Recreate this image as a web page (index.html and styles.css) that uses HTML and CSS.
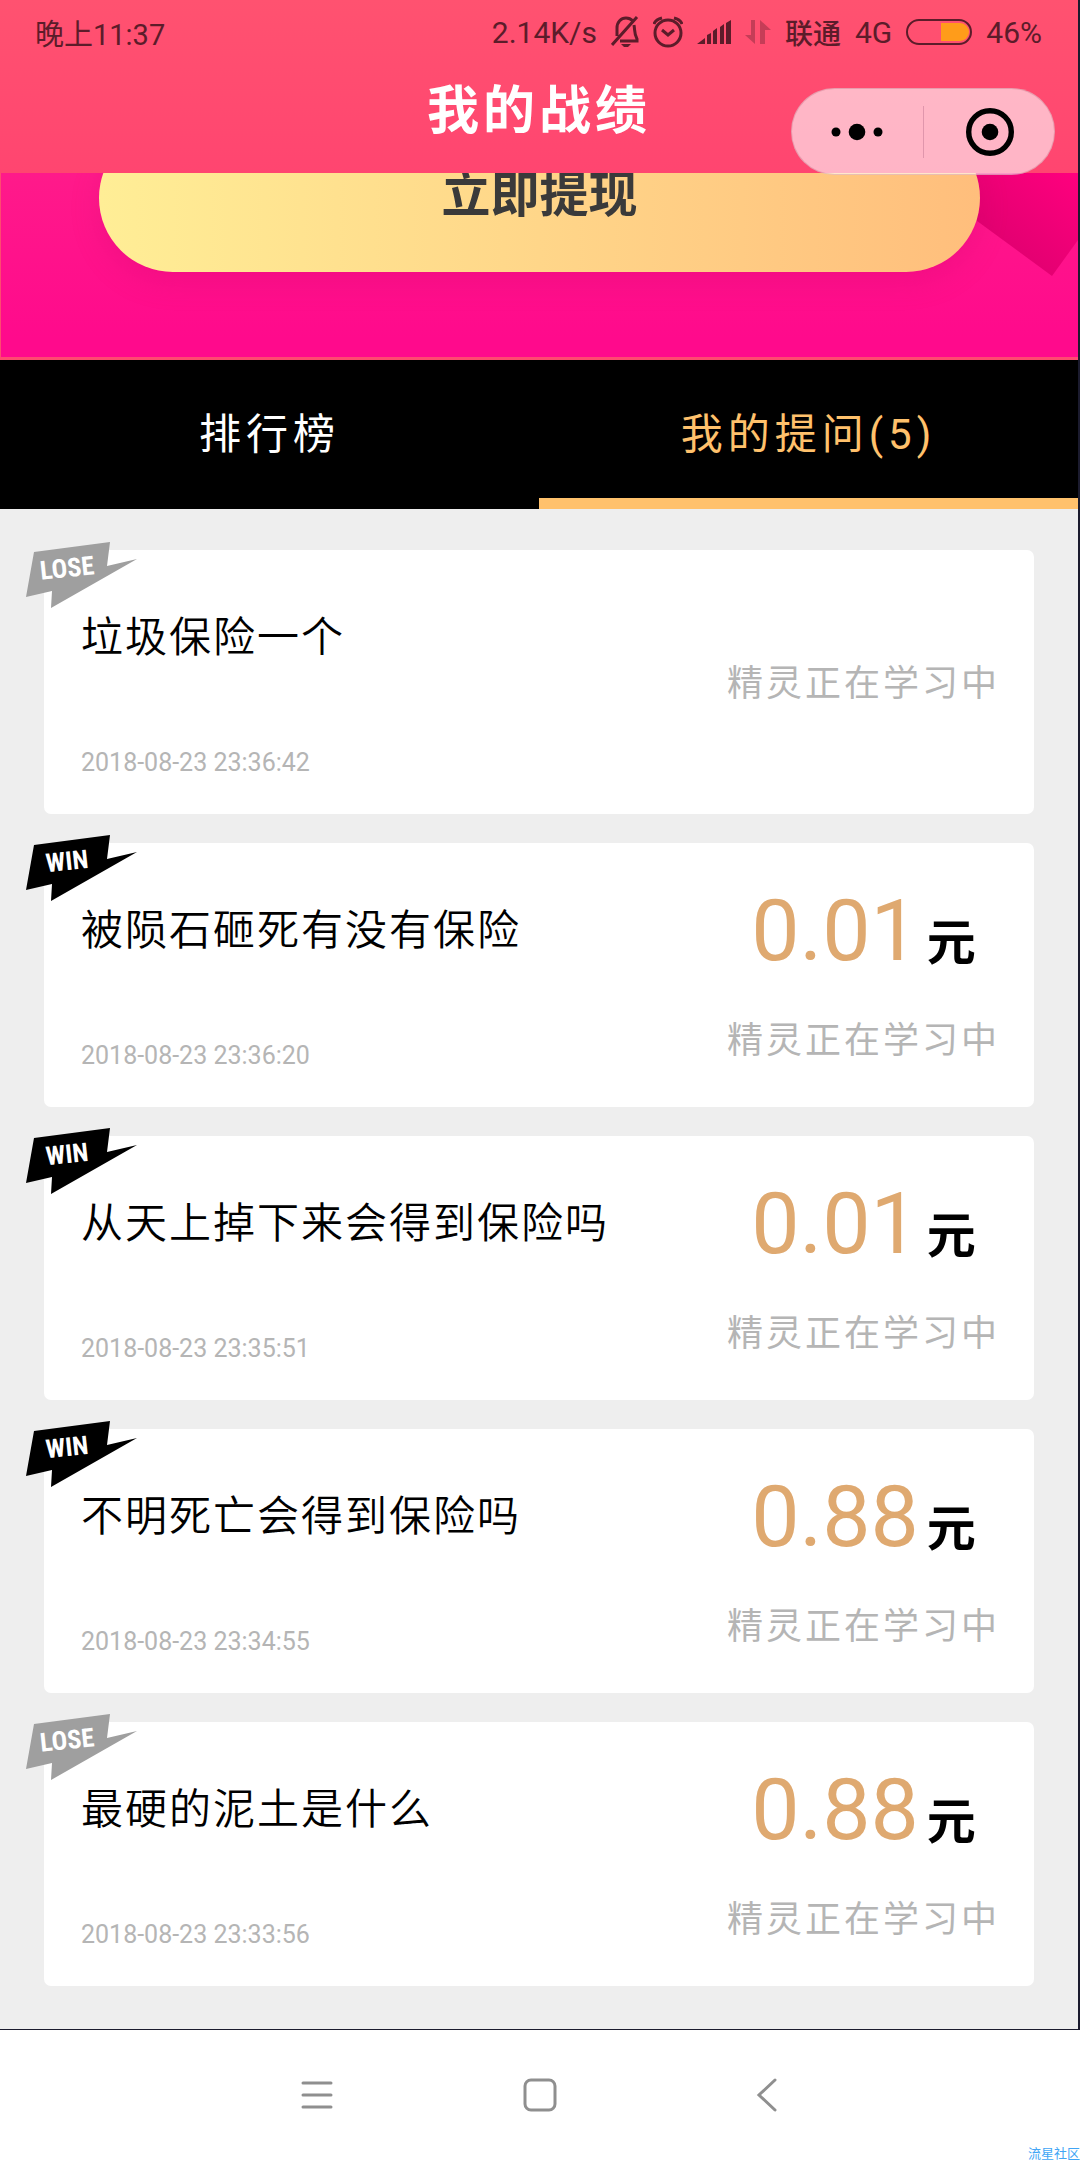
FILE: index.html
```html
<!DOCTYPE html>
<html lang="zh-CN">
<head>
<meta charset="utf-8">
<meta name="viewport" content="width=device-width, initial-scale=1">
<title>我的战绩</title>
<link rel="stylesheet" href="styles.css">
</head>
<body>
<svg class="defs" aria-hidden="true">
  <symbol id="flag" viewBox="0 0 112 68"><path d="M8 11 84 1 81 25 111 18 25 67 26 50 0 56Z"/></symbol>
</svg>
<div class="app">
  <header class="header">
    <div class="status-bar">
      <span class="clock">晚上11:37</span>
      <div class="status-icons">
        <span>2.14K/s</span>
        <svg width="28" height="32" viewBox="0 0 28 32" fill="none" stroke="currentColor" stroke-width="3"><path d="M6 20V12C6 6 10 2 15 2c3 0 5 1 7 3M23 9c1 5 0 9 3 14v2H9M1 29 26 1"/><path d="M10 28h10l-3 3h-4z" fill="currentColor" stroke="none"/></svg>
        <svg width="30" height="32" viewBox="0 0 30 32" fill="none" stroke="currentColor" stroke-width="3"><circle cx="15" cy="17" r="13"/><path d="m9 14 6 5 6-5M1 8c1-3 4-5 8-6M29 8c-1-3-4-5-8-6"/></svg>
        <svg width="34" height="24" viewBox="0 0 34 24" fill="currentColor"><path d="M0 24 8 18v6zM10 15l4-2v11h-4zM16 11l4-3v16h-4zM23 7l4-3v20h-4zM29 3l5-3v24h-5z"/></svg>
        <svg class="faded" width="26" height="26" viewBox="0 0 26 26" fill="currentColor"><path d="M6 1h4v24L0 16h6zM15 25V1l11 10h-6v14z"/></svg>
        <span class="carrier">联通</span>
        <span>4G</span>
        <svg width="66" height="26" viewBox="0 0 66 26"><path d="M35 4h19a9 9 0 0 1 0 18H35z" fill="#ff9c1a"/><rect x="1" y="1" width="64" height="24" rx="12" fill="none" stroke="currentColor" stroke-width="2"/></svg>
        <span>46%</span>
      </div>
    </div>
    <h1 class="title">我的战绩</h1>
    <div class="capsule">
      <button type="button" aria-label="更多"><svg width="54" height="54" viewBox="0 0 54 54"><circle cx="5" cy="27" r="4.5"/><circle cx="26" cy="27" r="8.3"/><circle cx="47" cy="27" r="4.5"/></svg></button>
      <button type="button" aria-label="关闭"><svg width="54" height="54" viewBox="0 0 54 54"><circle cx="28" cy="26" r="21.3" fill="none" stroke="#000" stroke-width="5.4"/><circle cx="28" cy="26" r="8.3"/></svg></button>
    </div>
  </header>

  <section class="hero">
    <svg class="ribbon" width="120" height="104" viewBox="0 0 120 104" aria-hidden="true">
      <defs><linearGradient id="ribbonFill" x1="0" y1="1" x2="1" y2="0"><stop offset="0" stop-color="#d4006a"/><stop offset="1" stop-color="#ff007e"/></linearGradient></defs>
      <path d="M0 0H120V67L94 103 0 34Z" fill="url(#ribbonFill)"/>
    </svg>
    <button type="button" class="withdraw">立即提现</button>
  </section>

  <nav class="tabs">
    <button type="button" class="tab">排行榜</button>
    <button type="button" class="tab active">我的提问(5)</button>
  </nav>

  <main class="records">
    <article class="card">
      <div class="badge lose"><svg><use href="#flag"/></svg><span>LOSE</span></div>
      <div class="question"><h2>垃圾保险一个</h2><time>2018-08-23 23:36:42</time></div>
      <div class="result"><p class="state">精灵正在学习中</p></div>
    </article>
    <article class="card">
      <div class="badge"><svg><use href="#flag"/></svg><span>WIN</span></div>
      <div class="question"><h2>被陨石砸死有没有保险</h2><time>2018-08-23 23:36:20</time></div>
      <div class="result"><p class="amount">0.01<b>元</b></p><p class="state">精灵正在学习中</p></div>
    </article>
    <article class="card">
      <div class="badge"><svg><use href="#flag"/></svg><span>WIN</span></div>
      <div class="question"><h2>从天上掉下来会得到保险吗</h2><time>2018-08-23 23:35:51</time></div>
      <div class="result"><p class="amount">0.01<b>元</b></p><p class="state">精灵正在学习中</p></div>
    </article>
    <article class="card">
      <div class="badge"><svg><use href="#flag"/></svg><span>WIN</span></div>
      <div class="question"><h2>不明死亡会得到保险吗</h2><time>2018-08-23 23:34:55</time></div>
      <div class="result"><p class="amount">0.88<b>元</b></p><p class="state">精灵正在学习中</p></div>
    </article>
    <article class="card">
      <div class="badge lose"><svg><use href="#flag"/></svg><span>LOSE</span></div>
      <div class="question"><h2>最硬的泥土是什么</h2><time>2018-08-23 23:33:56</time></div>
      <div class="result"><p class="amount">0.88<b>元</b></p><p class="state">精灵正在学习中</p></div>
    </article>
  </main>
</div>

<footer class="system-nav">
  <button type="button" aria-label="菜单"><svg width="34" height="34" viewBox="0 0 34 34"><path d="M4 5h28M4 17h28M4 29h28"/></svg></button>
  <button type="button" aria-label="主页"><svg width="34" height="34" viewBox="0 0 34 34"><rect x="2" y="2" width="30" height="30" rx="6"/></svg></button>
  <button type="button" aria-label="返回"><svg width="34" height="34" viewBox="0 0 34 34"><path d="M28 2 12 17l16 15"/></svg></button>
  <span class="watermark">流星社区</span>
</footer>
</body>
</html>
```
FILE: styles.css
```css
* {
  box-sizing: border-box;
  margin: 0;
}

body {
  min-height: 100vh;
  display: flex;
  flex-direction: column;
  background: #fff;
  color: #000;
  font-family: Roboto, "Noto Sans CJK SC", sans-serif;
}

button {
  padding: 0;
  border: 0;
  background: none;
  color: inherit;
  font: inherit;
}

svg {
  display: block;
}

.defs {
  position: absolute;
  width: 0;
  height: 0;
}

.app {
  flex: 1;
  display: flex;
  flex-direction: column;
  border-right: 2px solid #1b1b2e;
  background: #eee;
}

/* Header */
.header {
  position: relative;
  z-index: 2;
  padding-bottom: 28px;
  background: linear-gradient(#ff5270, #ff4570);
}

.status-bar {
  display: flex;
  justify-content: space-between;
  align-items: center;
  height: 64px;
  padding: 0 36px 0 35px;
  color: #5c1c2a;
  font-size: 30px;
}

.clock {
  font-size: 29px;
}

.status-icons {
  display: flex;
  align-items: center;
  gap: 14px;
}

.carrier {
  font-size: 28px;
  font-weight: 500;
}

.faded {
  opacity: 0.35;
}

.title {
  height: 81px;
  line-height: 96px;
  color: #fff;
  font-size: 52px;
  font-weight: 700;
  letter-spacing: 4px;
  text-align: center;
}

.capsule {
  position: absolute;
  top: 88px;
  right: 23px;
  display: grid;
  grid-template-columns: 1fr 1fr;
  width: 264px;
  height: 87px;
  border: 1px solid rgba(180, 100, 120, 0.3);
  border-radius: 44px;
  background: rgba(255, 255, 255, 0.6);
}

.capsule button {
  display: grid;
  place-items: center;
}

.capsule button + button {
  height: 52px;
  align-self: center;
  border-left: 1px solid #e096ac;
}

/* Hero */
.hero {
  position: relative;
  height: 187px;
  padding: 0 98px;
  overflow: hidden;
  border: solid #ff4a70;
  border-width: 0 0 3px 1px;
  background: linear-gradient(#ff1a8a, #ff0a8c 90%);
}

.ribbon {
  position: absolute;
  top: 0;
  right: 0;
  width: 120px;
  height: 104px;
}

.withdraw {
  position: relative;
  display: block;
  width: 100%;
  height: 148px;
  margin-top: -49px;
  padding-bottom: 16px;
  border-radius: 74px;
  background: linear-gradient(90deg, #ffee96, #ffbe7c);
  box-shadow: 0 10px 30px rgba(190, 0, 100, 0.2);
  color: #3a3a3a;
  font-size: 49px;
  font-weight: 700;
}

/* Tabs */
.tabs {
  display: grid;
  grid-template-columns: 1fr 1fr;
  height: 149px;
  background: #000;
  color: #fff;
}

.tab {
  padding-bottom: 8px;
  font-size: 42px;
  letter-spacing: 5px;
}

.tab.active {
  box-shadow: inset 0 -11px #ffc16c;
  color: #ffc16c;
}

/* Records */
.records {
  flex: 1;
  display: flex;
  flex-direction: column;
  gap: 29px;
  padding: 41px 44px 43px;
}

.card {
  position: relative;
  display: flex;
  justify-content: space-between;
  min-height: 264px;
  padding: 0 34px 0 37px;
  border-radius: 7px;
  background: #fff;
}

.badge {
  position: absolute;
  top: -9px;
  left: -18px;
  width: 112px;
  height: 68px;
  color: #000;
}

.badge.lose {
  color: #9f9f9f;
}

.badge svg {
  width: 112px;
  height: 68px;
  fill: currentColor;
}

.badge span {
  position: absolute;
  top: 9px;
  left: 1px;
  width: 80px;
  color: #fff;
  font-family: "Liberation Sans Narrow", "Roboto Condensed", Roboto, sans-serif;
  font-size: 26px;
  font-weight: 700;
  line-height: 36px;
  text-align: center;
  transform: rotate(-6deg);
}

.question {
  display: flex;
  flex-direction: column;
  justify-content: space-between;
  padding: 58px 0 33px;
}

.question h2 {
  font-size: 42px;
  font-weight: 350;
  letter-spacing: 2px;
  line-height: 60px;
}

.question time {
  color: #b5b5b5;
  font-size: 25px;
  line-height: 36px;
}

.result {
  display: flex;
  flex-direction: column;
  align-items: center;
  justify-content: center;
  gap: 15px;
  padding-top: 4px;
}

.amount {
  color: #dfa970;
  font-size: 86px;
  line-height: 100px;
}

.amount b {
  margin-left: 8px;
  color: #000;
  font-size: 49px;
}

.state {
  color: #b5b5b5;
  font-size: 36px;
  letter-spacing: 3px;
  line-height: 64px;
}

/* System navigation */
.system-nav {
  position: relative;
  display: flex;
  justify-content: center;
  gap: 190px;
  height: 131px;
  border-top: 1px solid #1b1b2e;
  background: #fff;
}

.system-nav svg {
  fill: none;
  stroke: #8f8f8f;
  stroke-width: 3;
  stroke-linecap: round;
}

.watermark {
  position: absolute;
  right: 0;
  bottom: 0;
  color: #41a5f5;
  font-size: 13px;
  line-height: 12px;
}
```
